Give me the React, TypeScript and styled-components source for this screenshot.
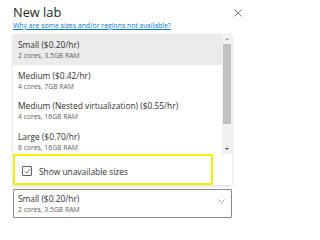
import React from "react";
import styled, { createGlobalStyle } from "styled-components";

const Global = createGlobalStyle`
  html, body { margin: 0; padding: 0; background: #ffffff; }
  body { font-family: "Segoe UI", "Open Sans", "Noto Sans", sans-serif; color: #323130; }
`;

const Page = styled.div`
  width: 242px;
  height: 221px;
  box-sizing: border-box;
  padding: 4px 0 0 13px;
  overflow: hidden;
  display: flex;
  flex-direction: column;
`;

const Header = styled.div`
  display: flex;
  justify-content: space-between;
  align-items: flex-start;
`;

const Title = styled.div`
  font-size: 12.8px;
  line-height: 17px;
  font-weight: 500;
  color: #201f1e;
`;

const Close = styled.svg`
  width: 8px;
  height: 8px;
  margin-top: 5px;
`;

const HelpLink = styled.a`
  font-size: 6.9px;
  line-height: 10px;
  color: #0078d4;
  text-decoration: underline;
`;

const Callout = styled.div`
  margin-top: 3px;
  width: 219px;
  background: #fff;
  box-shadow: 0 1px 3px rgba(0, 0, 0, 0.18);
  display: flex;
  flex-direction: column;
`;

const ListArea = styled.div`
  display: flex;
  height: 120px;
  overflow: hidden;
`;

const Options = styled.div`
  flex: 1;
  display: flex;
  flex-direction: column;
`;

const Option = styled.div<{ $selected?: boolean }>`
  height: 30.5px;
  flex: none;
  box-sizing: border-box;
  padding: 5px 0 0 5px;
  background: ${(p) => (p.$selected ? "#edebe9" : "#ffffff")};
`;

const OptTitle = styled.div`
  font-size: 8.4px;
  line-height: 12px;
  color: #323130;
  white-space: nowrap;
`;

const OptSub = styled.div`
  font-size: 6.8px;
  line-height: 10px;
  color: #605e5c;
  white-space: nowrap;
`;

const Scrollbar = styled.div`
  width: 10px;
  background: #f1f1f1;
  display: flex;
  flex-direction: column;
  align-items: center;
`;

const Arrow = styled.div<{ $down?: boolean }>`
  height: 10px;
  width: 10px;
  display: flex;
  align-items: center;
  justify-content: center;
  &::after {
    content: "";
    width: 0;
    height: 0;
    border-left: 2.5px solid transparent;
    border-right: 2.5px solid transparent;
    ${(p) =>
      p.$down
        ? "border-top: 2.5px solid #505050;"
        : "border-bottom: 2.5px solid #a3a3a3;"}
  }
`;

const Thumb = styled.div`
  width: 8px;
  height: 80px;
  background: #c1c1c1;
`;

const Track = styled.div`
  flex: 1;
`;

const CheckRow = styled.div`
  height: 31px;
  box-sizing: border-box;
  width: 200px;
  border: 2px solid #f6ee00;
  display: flex;
  align-items: center;
  padding-left: 7px;
  gap: 7px;
`;

const Box = styled.div`
  width: 10px;
  height: 10px;
  box-sizing: border-box;
  border: 1px solid #605e5c;
  border-radius: 1px;
  display: flex;
  align-items: center;
  justify-content: center;
  margin-top: 3px;
`;

const CheckLabel = styled.span`
  font-size: 8.4px;
  color: #323130;
  margin-top: 3px;
`;

const Select = styled.div`
  margin-top: 4px;
  width: 219px;
  height: 29px;
  box-sizing: border-box;
  border: 1px solid #8a8886;
  border-radius: 1px;
  display: flex;
  justify-content: space-between;
  padding: 3px 0 0 4px;
`;

const Chevron = styled.svg`
  width: 7px;
  height: 4px;
  margin: 6px 6px 0 0;
`;

const options = [
  { t: "Small ($0.20/hr)", s: "2 cores, 3.5GB RAM" },
  { t: "Medium ($0.42/hr)", s: "4 cores, 7GB RAM" },
  { t: "Medium (Nested virtualization) ($0.55/hr)", s: "4 cores, 16GB RAM" },
  { t: "Large ($0.70/hr)", s: "8 cores, 16GB RAM" },
];

export default function App() {
  return (
    <>
      <Global />
      <Page>
        <Header>
          <Title>New lab</Title>
          <Close viewBox="0 0 8 8">
            <path d="M0.5 0.5 L7.5 7.5 M7.5 0.5 L0.5 7.5" stroke="#605e5c" strokeWidth="0.8" />
          </Close>
        </Header>
        <HelpLink href="#">Why are some sizes and/or regions not available?</HelpLink>
        <Callout>
          <ListArea>
            <Options>
              {options.map((o, i) => (
                <Option key={o.t} $selected={i === 0}>
                  <OptTitle>{o.t}</OptTitle>
                  <OptSub>{o.s}</OptSub>
                </Option>
              ))}
            </Options>
            <Scrollbar>
              <Arrow />
              <Thumb />
              <Track />
              <Arrow $down />
            </Scrollbar>
          </ListArea>
          <CheckRow>
            <Box>
              <svg width="7" height="6" viewBox="0 0 7 6">
                <path d="M0.8 3.2 L2.6 5 L6.2 1" fill="none" stroke="#605e5c" strokeWidth="0.8" />
              </svg>
            </Box>
            <CheckLabel>Show unavailable sizes</CheckLabel>
          </CheckRow>
        </Callout>
        <Select>
          <div>
            <OptTitle>Small ($0.20/hr)</OptTitle>
            <OptSub>2 cores, 3.5GB RAM</OptSub>
          </div>
          <Chevron viewBox="0 0 7 4">
            <path d="M0.3 0.3 L3.5 3.5 L6.7 0.3" fill="none" stroke="#8a8886" strokeWidth="0.7" />
          </Chevron>
        </Select>
      </Page>
    </>
  );
}
